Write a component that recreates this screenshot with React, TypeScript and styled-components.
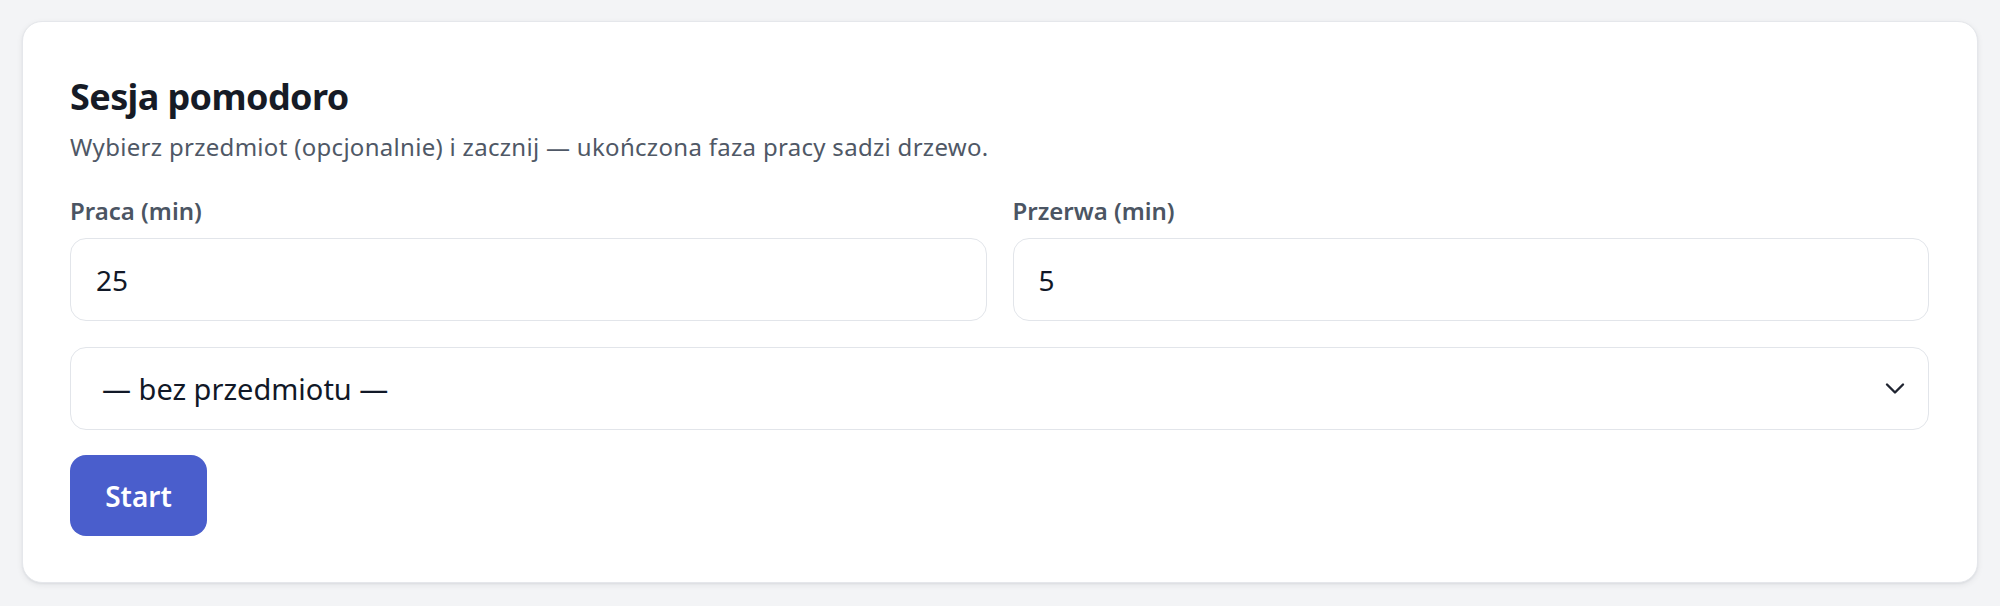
import React from "react";
import styled, { createGlobalStyle } from "styled-components";

const Global = createGlobalStyle`
  html, body { margin: 0; padding: 0; background: #f3f4f6; }
  body { font-family: "Noto Sans", "Open Sans", sans-serif; }
  * { box-sizing: border-box; }
`;

const Page = styled.div`
  padding: 21px 22px 23px 22px;
`;

const Card = styled.section`
  background: #ffffff;
  border: 1px solid #e5e7eb;
  border-radius: 20px;
  box-shadow: 0 2px 6px rgba(17, 24, 39, 0.07), 0 1px 2px rgba(17, 24, 39, 0.05);
  padding: 52px 48px 46px 47px;
  display: flex;
  flex-direction: column;
`;

const Title = styled.h2`
  margin: 0 0 11px 0;
  font-size: 36px;
  line-height: 46px;
  font-weight: 700;
  letter-spacing: -0.6px;
  color: #161b26;
`;

const Subtitle = styled.p`
  margin: 0 0 32px 0;
  font-size: 24px;
  line-height: 32px;
  letter-spacing: 0.3px;
  color: #4f5866;
`;

const FieldRow = styled.div`
  display: grid;
  grid-template-columns: 1fr 1fr;
  gap: 26px;
  margin-bottom: 26px;
`;

const Field = styled.label`
  display: flex;
  flex-direction: column;
  gap: 11px;
`;

const LabelText = styled.span`
  font-size: 24px;
  line-height: 32px;
  font-weight: 600;
  color: #4b5563;
`;

const Input = styled.input`
  height: 83px;
  width: 100%;
  border: 1.5px solid #e2e5ea;
  border-radius: 16px;
  padding: 0 25px;
  font-family: inherit;
  font-size: 28px;
  color: #111827;
  background: #fff;
  outline: none;
`;

const SelectWrap = styled.div`
  position: relative;
  margin-bottom: 25px;
`;

const Select = styled.select`
  appearance: none;
  -webkit-appearance: none;
  height: 83px;
  width: 100%;
  border: 1.5px solid #e2e5ea;
  border-radius: 16px;
  padding: 0 60px 0 31px;
  font-family: inherit;
  font-size: 29px;
  color: #111827;
  background: #fff;
  outline: none;
`;

const Chevron = styled.svg`
  position: absolute;
  right: 24px;
  top: 50%;
  transform: translateY(-50%);
  pointer-events: none;
`;

const Button = styled.button`
  align-self: flex-start;
  width: 137px;
  height: 81px;
  border: none;
  border-radius: 16px;
  background: #4a5ecc;
  color: #ffffff;
  font-family: inherit;
  font-size: 28px;
  font-weight: 600;
  cursor: pointer;
`;

export default function App() {
  return (
    <>
      <Global />
      <Page>
        <Card>
          <Title>Sesja pomodoro</Title>
          <Subtitle>
            Wybierz przedmiot (opcjonalnie) i zacznij — ukończona faza pracy sadzi drzewo.
          </Subtitle>
          <FieldRow>
            <Field>
              <LabelText>Praca (min)</LabelText>
              <Input type="number" defaultValue={25} />
            </Field>
            <Field>
              <LabelText>Przerwa (min)</LabelText>
              <Input type="number" defaultValue={5} />
            </Field>
          </FieldRow>
          <SelectWrap>
            <Select defaultValue="">
              <option value="">— bez przedmiotu —</option>
            </Select>
            <Chevron width="20" height="13" viewBox="0 0 20 13" fill="none">
              <path d="M2 2 L10 10 L18 2" stroke="#1f2430" strokeWidth="2.4" strokeLinecap="round" strokeLinejoin="round" />
            </Chevron>
          </SelectWrap>
          <Button type="button">Start</Button>
        </Card>
      </Page>
    </>
  );
}
